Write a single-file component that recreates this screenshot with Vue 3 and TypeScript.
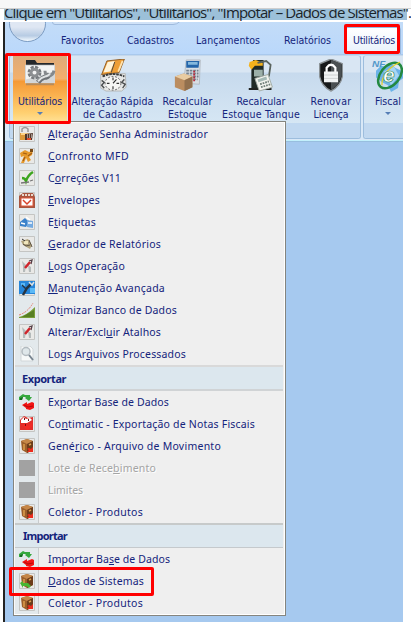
<script setup lang="ts">
interface MenuItem { pre: string; key: string; post: string; width: number; icon: string; disabled?: boolean }
interface MenuSection { title?: string; width?: number; items: MenuItem[] }

function item(label: string, width: number, icon: string, disabled = false): MenuItem {
  const parts = label.split('_')
  return parts.length === 3
    ? { pre: parts[0], key: parts[1], post: parts[2], width, icon, disabled }
    : { pre: label, key: '', post: '', width, icon, disabled }
}

const tabs = [
  { label: 'Favoritos', width: 43 },
  { label: 'Cadastros', width: 47 },
  { label: 'Lançamentos', width: 64 },
  { label: 'Relatórios', width: 47 },
  { label: 'Utilitários', width: 42 },
]

const tools = [
  { icon: 'folder', cls: 't-util', lines: [{ t: 'Utilitários', w: 44 }], arrow: true },
  { icon: 'notes', cls: 't-alt', lines: [{ t: 'Alteração Rápida', w: 82 }, { t: 'de Cadastro', w: 59 }], arrow: false },
  { icon: 'calc', cls: 't-rec', lines: [{ t: 'Recalcular', w: 50 }, { t: 'Estoque', w: 39 }], arrow: false },
  { icon: 'pump', cls: 't-tan', lines: [{ t: 'Recalcular', w: 49 }, { t: 'Estoque Tanque', w: 78 }], arrow: false },
  { icon: 'shield', cls: 't-ren', lines: [{ t: 'Renovar', w: 41 }, { t: 'Licença', w: 35 }], arrow: false },
]

const sections: MenuSection[] = [
  {
    items: [
      item('_A_lteração Senha Administrador', 160, 'lock'),
      item('_C_onfronto MFD', 81, 'key'),
      item('C_o_rreções V11', 73, 'check'),
      item('_E_nvelopes', 52, 'mail'),
      item('E_t_iquetas', 48, 'tags'),
      item('_G_erador de Relatórios', 113, 'report'),
      item('_L_ogs Operação', 77, 'log'),
      item('_M_anutenção Avançada', 117, 'tool'),
      item('Ot_i_mizar Banco de Dados', 129, 'chart'),
      item('Alterar/Excl_u_ir Atalhos', 113, 'log'),
      item('Logs Ar_q_uivos Processados', 138, 'search'),
    ],
  },
  {
    title: 'Exportar', width: 44,
    items: [
      item('Ex_p_ortar Base de Dados', 121, 'swap'),
      item('Co_n_timatic - Exportação de Notas Fiscais', 207, 'export'),
      item('Gené_r_ico - Arquivo de Movimento', 173, 'box'),
      item('Lote de Rece_b_imento', 108, 'none', true),
      item('Limites', 35, 'none', true),
      item('Coletor - Produtos', 95, 'box'),
    ],
  },
  {
    title: 'Importar', width: 44,
    items: [
      item('Importar Ba_s_e de Dados', 122, 'swap'),
      item('_D_ados de Sistemas', 96, 'boxin'),
      item('Coletor - Produtos', 95, 'box'),
    ],
  },
]

/* Distributes letter spacing so a label fills its nominal width. */
const vFit = {
  mounted(el: HTMLElement, binding: { value: number }) {
    const n = (el.textContent ?? '').length
    const natural = el.getBoundingClientRect().width
    el.style.letterSpacing = `${(binding.value - natural) / n}px`
  },
}
</script>

<template>
  <div class="page">
    <div class="topbar"></div>
    <div class="heading"><span class="mark"><span v-fit="407" class="headtext">Clique em "Utilitários", "Utilitários", "Impotar – Dados de Sistemas".</span></span></div>

    <div class="app">
      <div class="strip">
        <div class="orb"></div>
        <div class="quick"></div>
        <nav class="tabs">
          <div v-for="(t, i) in tabs" :key="t.label" class="tab" :class="['tab' + i, { active: i === 4 }]">
            <span v-fit="t.width">{{ t.label }}</span>
          </div>
        </nav>
      </div>

      <div class="ribbon">
        <div class="group main">
          <div class="tools">
            <div v-for="t in tools" :key="t.cls" class="tool" :class="t.cls">
              <svg class="big" viewBox="0 0 32 34" preserveAspectRatio="none">
                <g v-if="t.icon === 'folder'">
                  <path d="M2 10V1h9l2 3h17v6z" fill="#24272b" />
                  <path d="M1 6h30v19H1z" fill="#d4d7d8" />
                  <path d="M2 7h28v6L2 21z" fill="#f3f4f4" />
                  <path d="M2 25h28v2H2z" fill="#777" opacity=".5" />
                  <circle cx="10.500" cy="14" r="5.500" fill="none" stroke="#777b7f" stroke-width="3" stroke-dasharray="3 1.300" />
                  <circle cx="10.500" cy="14" r="3.500" fill="none" stroke="#8c8f92" stroke-width="3" />
                  <path d="M14 24q3-4 6-5q4 0 6-4" fill="none" stroke="#6d7175" stroke-width="5" />
                  <path d="M21 12q0 5 4 5 4 0 5-5" fill="none" stroke="#85898c" stroke-width="3" />
                  <path d="M14 23q3-4 7-5q3 0 5-3" fill="none" stroke="#dfe2e3" stroke-width="2" />
                </g>
                <g v-else-if="t.icon === 'notes'">
                  <path d="M2 16v14l6 3h18l5-4-1-14z" fill="#e6e7e6" stroke="#b5b7b7" />
                  <path d="M9 2l20-2-6 14-20 2z" fill="#ee9e36" stroke="#8c5a24" />
                  <path d="M10 3l8-1-5 11-8 1z" fill="#fff4da" /><path d="M18 3l-4 11" stroke="#444" />
                  <path d="M27 2l-5 11" stroke="#ffe3ae" stroke-width="2" />
                  <path d="M4 18q12-5 25 0" fill="none" stroke="#3b3d3e" stroke-width="2" stroke-dasharray="3 1" />
                  <ellipse cx="16" cy="25" rx="9" ry="7" fill="#f6f6f4" stroke="#555" stroke-dasharray="2 2" />
                  <path d="M16 19v3M16 28v3M9 25h3M20 25h3M16 25l4-4" stroke="#333" stroke-width="1.300" />
                  <path d="M3 22l3 2-3 3 3 3M29 21l-3 3 4 2-3 4" fill="none" stroke="#4c4e50" stroke-width="1.500" />
                </g>
                <g v-else-if="t.icon === 'calc'">
                  <path d="M14 1h16l-1 25-18-1z" fill="#d8dee4" stroke="#b2bac1" />
                  <path d="M14 2h15l-1 7H14z" fill="#2465a9" /><path d="M16 3h11v3H16z" fill="#84b8dd" />
                  <path d="M14 12h14M14 15h14M14 18h14M14 21h13" stroke="#75818c" stroke-width="2" stroke-dasharray="3 1" />
                  <path d="M23 12v11" stroke="#bb2938" stroke-width="2" stroke-dasharray="2 1" />
                  <path d="M1 18l10-3 10 3v11l-9 4-11-4z" fill="#bb8d60" /><path d="M1 18l10-3 10 3-9 4z" fill="#e9cca2" /><path d="M12 22l9-4v11l-9 4z" fill="#92704e" />
                </g>
                <g v-else-if="t.icon === 'pump'">
                  <path d="M7 1h12v31H5V7z" fill="#202b27" /><path d="M3 3l7-2 8 3v3H9l-4 4-3-4z" fill="#f4b21c" />
                  <path d="M12 4l10-2 5 4-2 12" fill="none" stroke="#5b645e" stroke-width="2" />
                  <path d="M8 11h10v7H8z" fill="#9bafa8" /><path d="M2 31h26" stroke="#202321" stroke-width="2" />
                  <path d="M9 20l15-4 5 13-15 4z" fill="#f3f4ef" stroke="#a0aaa4" />
                  <path d="M12 21l10-3 1 3-10 3z" fill="#a4b9b5" /><path d="M15 26l10-3M16 29l11-3" stroke="#71807a" stroke-width="2" stroke-dasharray="2 1" />
                </g>
                <g v-else>
                  <path d="M16 0L29 5v13q-2 10-13 15Q5 28 3 18V5z" fill="#17191a" stroke="#8c9397" stroke-width="1.500" />
                  <path d="M16 1L28 5v12q-2 10-12 15z" fill="#4b5052" />
                  <path d="M11 14V9q5-6 10 0v5" fill="none" stroke="#fff" stroke-width="2.500" />
                  <path d="M8 13h16v11H8z" fill="#f1f3f3" /><path d="M8 16.500h16M8 20h16" stroke="#ccd0d0" />
                </g>
              </svg>
              <div v-for="l in t.lines" :key="l.t" class="line"><span v-fit="l.w">{{ l.t }}</span></div>
              <i v-if="t.arrow" class="arrow"></i>
            </div>
          </div>
          <div class="caption"></div>
        </div>
        <div class="group side">
          <div class="tools">
            <div class="tool t-fis">
              <svg class="big" viewBox="0 0 32 34" preserveAspectRatio="none">
                <path d="M4 12l5-5 5 1 5-4 4 5 8 4 1 6-5 4-1 7-7 4-3-7-6-3-6-5z" fill="#6bb3e8" /><path d="M12 13l10-5 5 9-8 10z" fill="#a8d5f3" />
                <ellipse cx="18" cy="17" rx="9.500" ry="15" transform="rotate(38 18 17)" fill="none" stroke="#238940" stroke-width="2.500" />
                <path d="M10 27Q9 13 28 3" fill="none" stroke="#e5cf26" stroke-width="1.200" />
                <text x="0" y="8" class="nf">NF</text><text x="11" y="24" class="ee">e</text>
              </svg>
              <div class="line"><span v-fit="26">Fiscal</span></div>
              <i class="arrow"></i>
            </div>
          </div>
          <div class="caption"></div>
        </div>
      </div>
      <div class="rule"></div>
    </div>

    <div class="menu">
      <section v-for="(s, si) in sections" :key="si">
        <h3 v-if="s.title" :class="'h' + si"><span v-fit="s.width">{{ s.title }}</span></h3>
        <div class="rows">
          <div v-for="(m, mi) in s.items" :key="mi" class="row" :class="{ off: m.disabled }">
            <div class="gutter">
              <svg viewBox="0 0 16 16">
                <g v-if="m.icon === 'none'"><path d="M0 0h16v16H0z" fill="#a2a2a2" /></g>
                <g v-else-if="m.icon === 'swap'">
                  <path d="M0 3l4-3 2 1h5v2h2l-3 4-4-3 1-1H4L3 6H0z" fill="#36a83e" /><path d="M1 4l3-1-1 3H1z" fill="#176c21" />
                  <path d="M3 11l5-3v2l5-2 2 1v5l-4 2-4-1v-1z" fill="#f21414" /><path d="M5 11l4 2 5-1" stroke="#b50a0a" fill="none" />
                </g>
                <g v-else-if="m.icon === 'chart'">
                  <path d="M0 15Q8 13 16 5v11H0z" fill="#789e38" /><path d="M3 15l12-7v7z" fill="#577f23" /><path d="M0 13Q9 10 14 1" fill="none" stroke="#e57969" stroke-dasharray="2 1" />
                </g>
                <g v-else-if="m.icon === 'search'">
                  <path d="M2 0h9l3 3v12H2z" fill="#f7f9f9" stroke="#d2d7d9" /><circle cx="7" cy="5.500" r="4" fill="#dfe7ea" stroke="#b3bbc0" stroke-width="1.500" /><path d="M10 9l4 5" stroke="#788490" stroke-width="2" />
                </g>
                <g v-else>
                  <path d="M.5.500h15v15H.5z" fill="#e9e9e7" stroke="#c4c5c3" />
                  <g v-if="m.icon === 'lock'">
                    <path d="M3 6V3q3-3 6 0v3" fill="none" stroke="#999" stroke-width="1.500" /><path d="M1 7h9v7H1z" fill="#dc9a3a" /><path d="M2 8h8" stroke="#ffd386" stroke-width="2" />
                    <path d="M6 8l8-1-1 7H6z" fill="#52372a" /><path d="M8 9h6M8 11h5" stroke="#eee" stroke-dasharray="1 1" /><path d="M8 12h4v2H8z" fill="#e34a28" />
                  </g>
                  <g v-else-if="m.icon === 'key'">
                    <path d="M1 5l5-3 4 2 4-2-1 5-3 2 2 3-3 2-2-4-2 5H2l3-7-3 1z" fill="#e69a2c" /><path d="M4 5l4 1M6 9l-2 4M9 8l4-3" stroke="#a35d14" stroke-width="1.200" /><path d="M11 1h3v3h-3z" fill="#774a18" />
                  </g>
                  <g v-else-if="m.icon === 'check'">
                    <path d="M3 8q3 0 4 3Q9 5 14 2" fill="none" stroke="#3da51f" stroke-width="2.500" /><path d="M2 13l8-1M11 11l3-1" stroke="#777" stroke-width="1.300" />
                  </g>
                  <g v-else-if="m.icon === 'mail'">
                    <path d="M0 4l4-3h10l2 4v11H0z" fill="#a8553f" /><path d="M2 6h12v8H2z" fill="#fff" stroke="#df583c" /><path d="M4 8l4 4 4-4" fill="none" stroke="#d94129" stroke-width="1.500" /><path d="M3 3h11" stroke="#e8d8cc" stroke-width="2" stroke-dasharray="2 1" />
                  </g>
                  <g v-else-if="m.icon === 'tags'">
                    <path d="M1 8l5-4 4 4-3 5-6-1z" fill="#3b82ca" /><path d="M8 6l6 1v7l-6-1z" fill="#74aae0" /><path d="M7 3l4 3M9 9h4M2 9l4 1" stroke="#fff" stroke-width="1.500" />
                  </g>
                  <g v-else-if="m.icon === 'report'">
                    <path d="M2 5l7-2 4 6-2 4-7-4z" fill="#b3a57f" /><path d="M5 5h4v3H5z" fill="#f0e6bd" /><path d="M4 8l3 2 4-1M10 4l3 7" stroke="#5c5242" fill="none" /><path d="M3 3l3 2" stroke="#333" />
                  </g>
                  <g v-else-if="m.icon === 'log'">
                    <path d="M3 3l4 4-1 7H4V8zM9 7l3 2v5h-2z" fill="#b4baba" /><path d="M6 10L11 4" stroke="#cf252b" stroke-width="2.500" /><path d="M10 3l3-1-1 4" stroke="#554048" stroke-width="1.300" fill="none" />
                  </g>
                  <g v-else-if="m.icon === 'tool'">
                    <path d="M0 1h16v13H0z" fill="#2685d8" /><path d="M2 3h4v3H2zM11 8h5v5h-5z" fill="#5bb9f6" /><path d="M4 15l4-7 4-4" stroke="#263442" stroke-width="2.500" fill="none" /><path d="M3 5l4 4" stroke="#263442" stroke-width="1.500" /><path d="M10 2l3 3 2-3" fill="none" stroke="#dde2e5" stroke-width="1.500" />
                  </g>
                  <g v-else-if="m.icon === 'export'">
                    <path d="M1 4l4-4 4 2 5-1v13H1z" fill="#e02d29" /><path d="M2 4l3-3 2 2 4-1 2 2-5 3H2z" fill="#fff" /><path d="M3 9l4-2 2 3 4-4v5l-5 3z" fill="#f22a24" /><path d="M5 3h1M9 4h1M6 9h1" stroke="#6b1111" stroke-width="2" />
                  </g>
                  <g v-else>
                    <path d="M2 3l6-2 6 2v9l-6 3-5-3z" fill="#9c5f2a" /><path d="M2 3l6-2 6 2-6 3z" fill="#c58748" /><path d="M8 6l6-3v9l-6 3z" fill="#6c3c1a" /><path d="M5 6v6M10 7l2-1" stroke="#dda04d" stroke-width="1.500" />
                    <path v-if="m.icon === 'boxin'" d="M1 10l3-2v2h5l3 3-2 2-3-2H4v2z" fill="#48b532" />
                    <path v-else d="M14 9v5H8l2-2-2-1 2-1 2 1z" fill="#ed2c1e" />
                  </g>
                </g>
              </svg>
            </div>
            <span v-fit="m.width" class="label">{{ m.pre }}<u v-if="m.key">{{ m.key }}</u>{{ m.post }}</span>
          </div>
        </div>
      </section>
    </div>

    <div class="hl hl-tool"></div>
    <div class="hl hl-tab"></div>
    <div class="hl hl-item"></div>
  </div>
</template>

<style>
body { margin: 0; background: #fff; }
</style>

<style scoped>
.page { position: relative; width: 411px; height: 622px; overflow: hidden; background: #fff; font-family: "Noto Sans", "Open Sans", sans-serif; font-size: 10.5px; color: #14247c; display: flex; flex-direction: column; }
.topbar { height: 8px; flex: none; background: #f7f7f7; border-bottom: 1px solid #cfcfcf; }
.heading { height: 12px; flex: none; overflow: hidden; padding-left: 4px; }
.mark { display: flex; width: 403px; height: 11px; background: #9cc0d9; }
.headtext { flex: none; white-space: nowrap; font-family: "Open Sans", sans-serif; font-size: 15px; line-height: 20px; color: #1b242a; height: 20px; margin-top: -7px; }
.app { width: 398px; margin-left: 3px; flex: 1; border-left: 2px solid #232323; background: #a6c9ef; margin-top: 1px; font-family: "DejaVu Sans Condensed", "DejaVu Sans", sans-serif; font-stretch: condensed; }
.strip { position: relative; height: 32px; background: linear-gradient(#c3dcf8, #bad8fb); border-bottom: 1px solid #a9c9ed; overflow: hidden; }
.orb { position: absolute; left: 4px; top: -17px; width: 35px; height: 35px; border: 1px solid #7b9bc2; border-radius: 50%; background: linear-gradient(#dfe7f3 60%, #b7cbe3 85%, #f5fbff); }
.quick { position: absolute; left: 47px; top: -14px; width: 129px; height: 15px; border: 1px solid #9fbadd; border-radius: 0 0 10px 3px; background: #d0e2f7; }
.tabs { display: flex; height: 32px; align-items: flex-end; }
.tab { height: 27px; line-height: 26px; white-space: nowrap; box-sizing: border-box; }
.tab0 { margin-left: 56px; width: 66px; }
.tab1 { width: 69px; }
.tab2 { width: 88px; }
.tab3 { width: 61px; }
.tab4 { width: 56px; padding-left: 7px; line-height: 24px; }
.active { border: 1px solid #9ab9df; border-bottom: 0; border-radius: 3px 3px 0 0; background: linear-gradient(#fff, #e7f1fb); }
.ribbon { display: flex; gap: 2px; height: 85px; padding-left: 4px; overflow: hidden; background: #d9e8f7; }
.group { height: 84px; box-sizing: border-box; border: 1px solid #9dbddd; border-top-color: #c5d8ec; border-radius: 3px; background: linear-gradient(#d9e6f3 0 16px, #c7daed 17px, #daeaf6); overflow: hidden; flex: none; }
.main { width: 352px; }
.side { width: 44px; border-right: 0; border-radius: 3px 0 0 3px; }
.tools { display: flex; height: 67px; }
.caption { height: 15px; background: #c1d8f0; }
.tool { flex: none; display: flex; flex-direction: column; align-items: center; padding-top: 3px; box-sizing: border-box; height: 67px; }
.big { width: 28px; height: 33px; flex: none; margin-bottom: 3px; }
.line { height: 13px; line-height: 13px; white-space: nowrap; }
.t-util { width: 54px; margin-left: 3px; background: linear-gradient(#ddaa78, #f3b06d 34%, #f59a36 38%, #ffd071 85%, #ffe39a); }
.t-util .big { width: 32px; }
.t-alt { width: 91px; }
.t-rec { width: 59px; }
.t-tan { width: 88px; }
.t-ren { width: 52px; }
.t-fis { width: 48px; }
.t-fis .big { width: 32px; }
.arrow { border: 3px solid transparent; border-top: 3px solid #567eb6; margin-top: 4px; }
.nf { font: italic bold 10px "Liberation Sans", sans-serif; fill: #5398ca; }
.ee { font: italic bold 21px "Liberation Sans", sans-serif; fill: #fff; stroke: #2c8753; stroke-width: .7px; }
.rule { height: 1px; background: #c2f0fc; border-bottom: 1px solid #98bedf; }
.menu { position: absolute; left: 13px; top: 121px; width: 273px; height: 495px; box-sizing: border-box; border: 1px solid #85857f; background: #efefef; box-shadow: inset -1px -1px 0 #fff, inset 1px 1px 0 #fafafa; padding: 1px 2px 1px 1px; }
h3 { margin: 0; box-sizing: border-box; font-size: 11px; font-weight: 700; background: #dce7ee; padding-left: 7px; white-space: nowrap; }
.h1 { height: 26px; line-height: 23px; border-top: 2px solid #d9d9d9; border-bottom: 2px solid #d0d3d5; }
.h2 { height: 25px; line-height: 21px; border-top: 2px solid #c7caca; border-bottom: 1px solid #c5c9cc; padding-left: 8px; }
.row { display: flex; height: 22px; align-items: center; }
.gutter { width: 24px; height: 22px; box-sizing: border-box; background: #e3e9ec; border-right: 1px solid #c9cccd; display: flex; align-items: center; padding-left: 4px; flex: none; }
.gutter svg { width: 16px; height: 16px; display: block; }
.label { flex: none; margin-left: 9px; white-space: pre; line-height: 18px; }
.label u { text-underline-offset: 1px; }
.off { color: #a4a4a4; text-shadow: 1px 1px 0 #fff; }
.hl { position: absolute; box-sizing: border-box; border: 3px solid #f00; border-radius: 2px; }
.hl-tool { left: 5px; top: 53px; width: 66px; height: 71px; }
.hl-tab { left: 344px; top: 24px; width: 56px; height: 30px; }
.hl-item { left: 9px; top: 567px; width: 145px; height: 29px; }
</style>
